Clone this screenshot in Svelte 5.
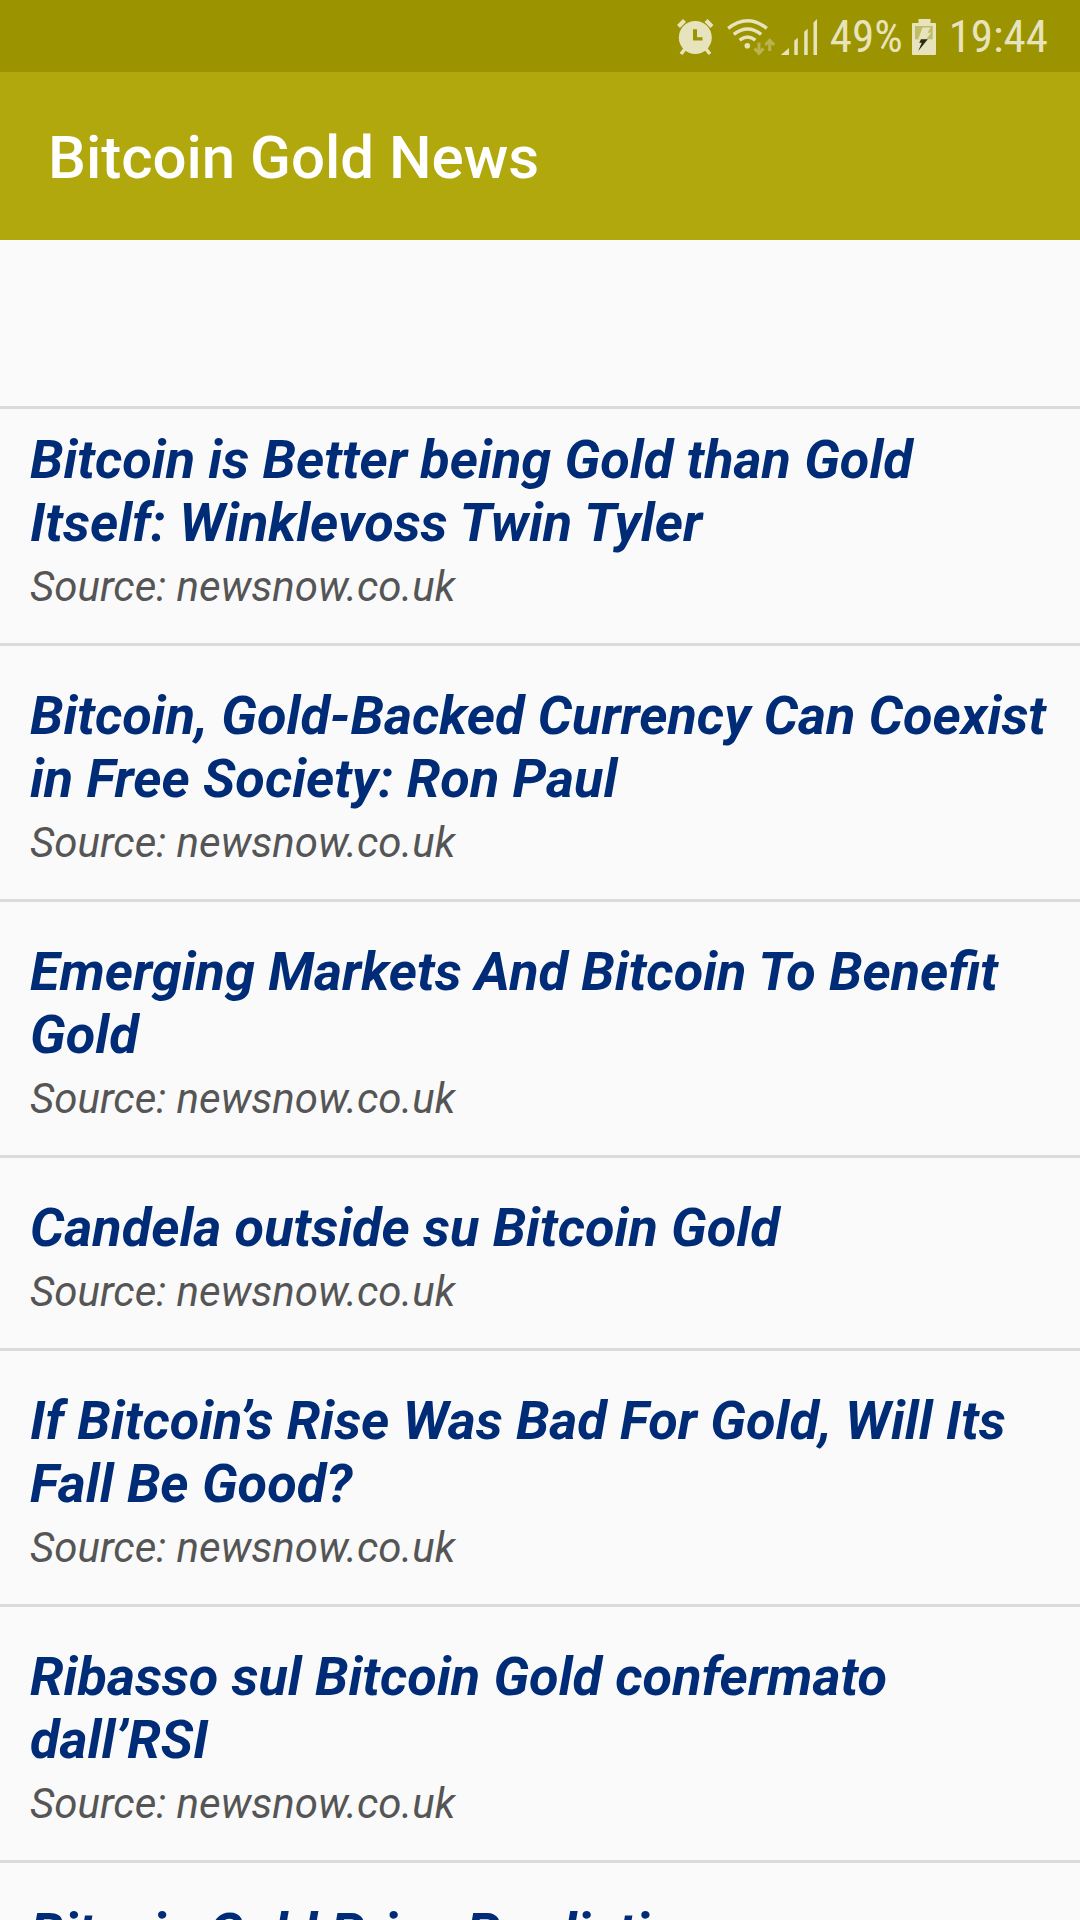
<script lang="ts">
	const battery = '49%';
	const time = '19:44';

	const articles = [
		{ title: 'Bitcoin is Better being Gold than Gold Itself: Winklevoss Twin Tyler', source: 'newsnow.co.uk' },
		{ title: 'Bitcoin, Gold-Backed Currency Can Coexist in Free Society: Ron Paul', source: 'newsnow.co.uk' },
		{ title: 'Emerging Markets And Bitcoin To Benefit Gold', source: 'newsnow.co.uk' },
		{ title: 'Candela outside su Bitcoin Gold', source: 'newsnow.co.uk' },
		{ title: 'If Bitcoin’s Rise Was Bad For Gold, Will Its Fall Be Good?', source: 'newsnow.co.uk' },
		{ title: 'Ribasso sul Bitcoin Gold confermato dall’RSI', source: 'newsnow.co.uk' },
		{ title: 'Bitcoin Gold Price Prediction', source: 'newsnow.co.uk' }
	];
</script>

<div class="screen">
	<div class="status-bar">
		<svg class="alarm" width="38" height="40" viewBox="0 0 38 40" aria-hidden="true">
			<circle cx="19.3" cy="20.5" r="16.5" fill="currentColor" />
			<path d="M2.5 9.5L8.5 3.5M30 3.5L36 9.5" stroke="currentColor" stroke-width="4.2" />
			<path d="M5 37L9 32M34 37L30 32" stroke="currentColor" stroke-width="3.6" />
			<path class="cutout" d="M17 12.3h4v7.9h5.5v3.2H17z" />
		</svg>
		<svg class="wifi" width="50" height="40" viewBox="0 0 50 40" fill="none" aria-hidden="true">
			<g stroke="currentColor" stroke-width="3.4">
				<path d="M2.2 11.4Q21.5 -4 40.8 11.4" />
				<path d="M7.8 17.4Q21.5 6.4 35.2 17.4" />
				<path d="M13.6 23.2Q21.5 17 29.4 23.2" />
			</g>
			<circle cx="21.3" cy="28.7" r="2.8" fill="currentColor" />
			<g class="traffic">
				<path d="M33 25.5V36M28.5 31.5L33 36.3L37.5 31.5" />
				<path d="M43.7 34V24M39.2 28L43.7 23.4L48.2 28" />
			</g>
		</svg>
		<svg class="signal" width="38" height="40" viewBox="0 0 38 40" fill="currentColor" aria-hidden="true">
			<path d="M.7 38L9 31v7zM14.3 38V23.8l3.5-3V38zM24.2 38V14.8l3.5-3V38zM33.5 38V5.5L37 2v36z" />
		</svg>
		<span class="battery-level">{battery}</span>
		<svg class="battery" width="26" height="40" viewBox="0 0 26 40" aria-hidden="true">
			<path d="M7.5 2h12v4H24q1 0 1 1v30q0 1-1 1H2q-1 0-1-1V7q0-1 1-1h5.5z" fill="currentColor" />
			<path class="drained" d="M4 9h17.7v13.3H4z" />
			<path d="M11.5 10.5h8.3l-3.3 5.2h3.7l-5 6.6H7.2z" fill="currentColor" />
			<path class="bolt" d="M10 22.3h6.8L7.3 34l3.4-8.2H8.2z" />
		</svg>
		<time class="clock">{time}</time>
	</div>

	<header class="app-bar">
		<h1>Bitcoin Gold News</h1>
	</header>

	<div class="banner"></div>

	<ul class="news">
		{#each articles as article}
			<li>
				<a href="#article">{article.title}</a>
				<p>Source: {article.source}</p>
			</li>
		{/each}
	</ul>
</div>

<style>
	:global(body) {
		background: #fafafa;
	}

	.screen {
		height: 100vh;
		overflow: hidden;
		display: flex;
		flex-direction: column;
		font-family: Roboto, 'Liberation Sans', sans-serif;
		background: #fafafa;
	}

	/* Status bar */
	.status-bar {
		flex: none;
		height: 72px;
		padding: 2px 32px 0 0;
		box-sizing: border-box;
		display: flex;
		align-items: center;
		justify-content: flex-end;
		background: #9c9300;
		color: #e7e4bd;
		font-family: 'Roboto Condensed', Roboto, sans-serif;
		font-size: 45px;
		line-height: 48px;
	}

	.status-bar svg {
		flex: none;
	}

	.wifi {
		margin-left: 12px;
	}

	.signal {
		margin-left: 4px;
	}

	.battery-level {
		margin-left: 12px;
	}

	.battery {
		margin-left: 8px;
	}

	.clock {
		margin-left: 12px;
	}

	.cutout {
		fill: #9c9300;
	}

	.traffic {
		stroke: #bab350;
		stroke-width: 3;
	}

	.drained {
		fill: #c1bc68;
	}

	.bolt {
		fill: #2b2a12;
	}

	/* App bar */
	.app-bar {
		flex: none;
		height: 168px;
		box-sizing: border-box;
		padding: 4px 48px 0;
		display: flex;
		align-items: center;
		background: #b0a80d;
	}

	h1 {
		margin: 0;
		font-size: 60px;
		line-height: 70px;
		font-weight: 500;
		color: #fff;
	}

	.banner {
		flex: none;
		height: 166px;
		border-bottom: 3px solid #dadbda;
	}

	/* News list */
	.news {
		flex: 1;
		min-height: 0;
		overflow: hidden;
		margin: 0;
		padding: 0;
		list-style: none;
	}

	.news li {
		padding: 38px 30px 32px;
		border-bottom: 3px solid #dadbda;
		font-style: italic;
	}

	.news li:first-child {
		padding-top: 19px;
	}

	.news a {
		display: block;
		font-size: 54px;
		line-height: 63px;
		font-weight: 700;
		color: #002c77;
		text-decoration: none;
	}

	.news p {
		margin: 8px 0 0;
		font-size: 42px;
		line-height: 49px;
		color: #555;
	}
</style>
